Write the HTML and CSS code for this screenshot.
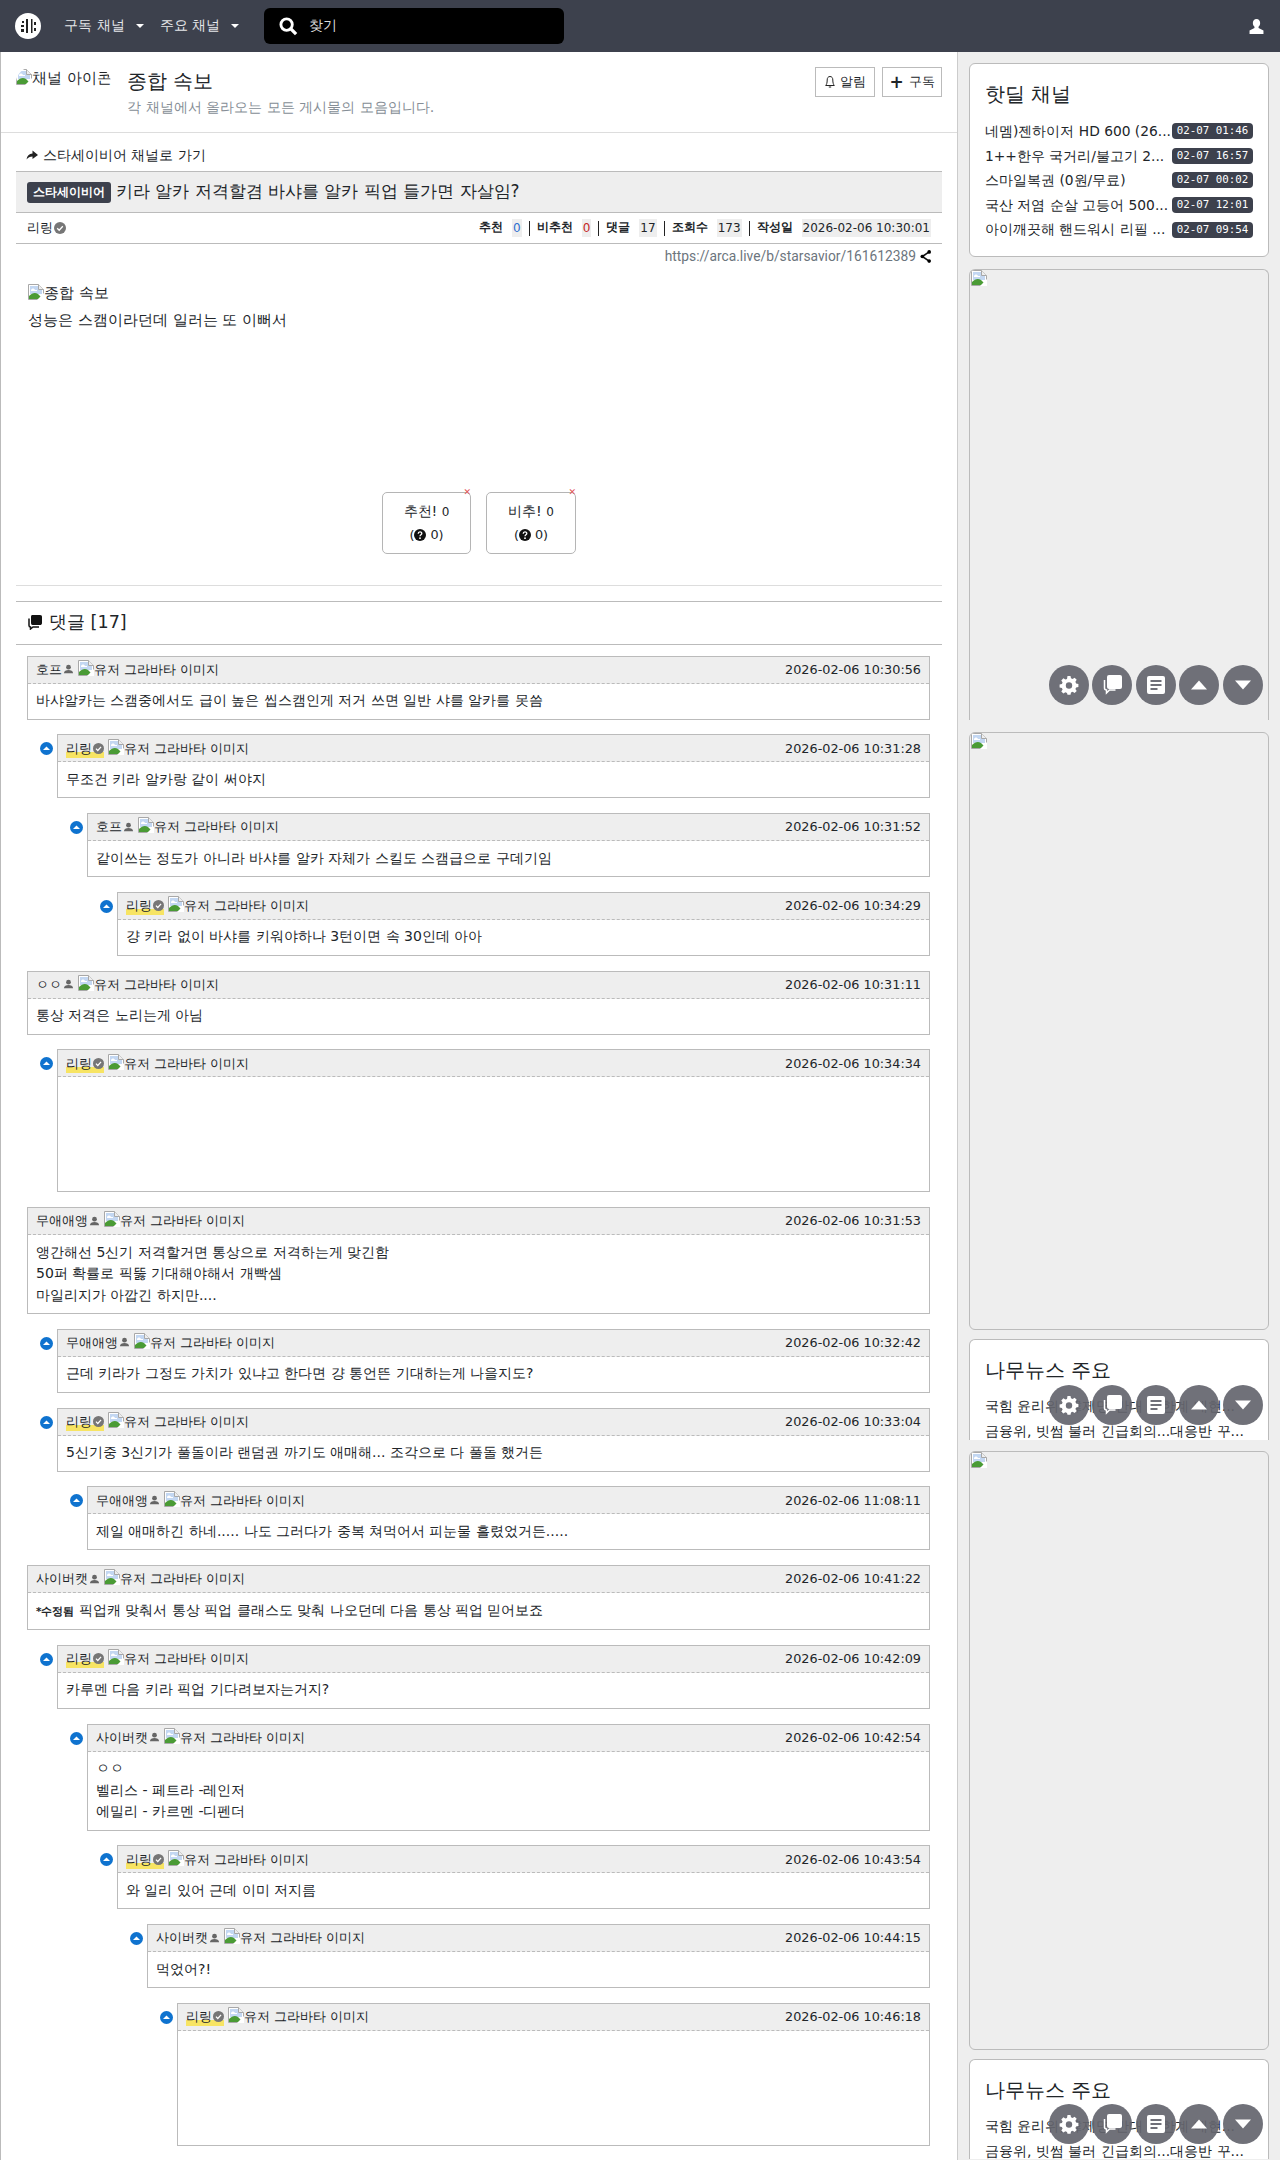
FILE: index.html
```html
<!DOCTYPE html>
<html>
<head>
<meta charset="utf-8">
<title>종합 속보</title>
<link rel="stylesheet" href="styles.css">
</head>
<body>
<svg class="defs" aria-hidden="true">
  <symbol id="broken" viewBox="0 0 16 16">
    <path d="M.5.5h10l5 5v10H.5z" fill="#fff" stroke="#a8a8a8"/>
    <path d="M2 2h8l4 4v4H2z" fill="#c3d7f2"/>
    <path d="M3 6c1-2 3-2 4 0h2v1H3z" fill="#fff"/>
    <path d="M1 15v-3c3-3 6-4 9-2l5 5z" fill="#4a9b35"/>
    <path d="M10.500 .5v5h5" fill="#eee" stroke="#a8a8a8"/>
    <path d="M9 16 16 9v7z" fill="#fff"/>
  </symbol>
  <symbol id="up" viewBox="0 0 13 13">
    <circle cx="6.500" cy="6.500" r="6.500" fill="#0f73cf"/>
    <path d="M3 8l3.500-3.500L10 8z" fill="#fff"/>
  </symbol>
  <symbol id="check" viewBox="0 0 12 12">
    <circle cx="6" cy="6" r="6" fill="#767676"/>
    <path d="M3.200 6.200l2 2 3.600-4" fill="none" stroke="#fff" stroke-width="1.300"/>
  </symbol>
  <symbol id="user" viewBox="0 0 12 12">
    <circle cx="6" cy="3.500" r="2.600" fill="#666"/>
    <path d="M1 10c0-2.500 2.500-3.500 5-3.500s5 1 5 3.500z" fill="#666"/>
  </symbol>
  <symbol id="help" viewBox="0 0 12 12">
    <circle cx="6" cy="6" r="6" fill="#111"/>
    <path d="M4.200 4.700c0-2.300 3.600-2.300 3.600-.2 0 1.300-1.800 1.300-1.800 2.700" fill="none" stroke="#fff" stroke-width="1.300"/>
    <circle cx="6" cy="9.200" r=".9" fill="#fff"/>
  </symbol>
  <symbol id="gear" viewBox="0 0 20 20">
    <path d="M8.500 1h3l.5 2.300 1.600.7 2-1.300 2.100 2.100-1.300 2 .7 1.600 2.300.5v3l-2.300.5-.7 1.600 1.300 2-2.100 2.100-2-1.300-1.600.7-.5 2.300h-3L8 18l-1.600-.7-2 1.300-2.100-2.100 1.300-2-.7-1.600L.6 12.400v-3L2.900 9l.7-1.600-1.300-2 2.100-2.100 2 1.300L8 3.900z" fill="#fff"/>
    <circle cx="10" cy="10.500" r="3.200" fill="#6f7079"/>
  </symbol>
  <symbol id="chat" viewBox="0 0 20 20">
    <rect x="5" y="0" width="15" height="14" rx="2" fill="#fff"/>
    <path d="M2.500 5v8c0 1.500 1 2 2 2v3l3-3h6" fill="none" stroke="#fff" stroke-width="1.500"/>
  </symbol>
  <symbol id="doc" viewBox="0 0 20 20">
    <rect x="1" y="1" width="18" height="18" rx="2" fill="#fff"/>
    <path d="M4.500 5h11v2h-11zM4.500 9h11v2h-11zM4.500 13h7v2h-7z" fill="#6f7079"/>
  </symbol>
  <symbol id="tri-up" viewBox="0 0 20 20"><path d="M10 5.500l8 9H2z" fill="#fff"/></symbol>
  <symbol id="tri-down" viewBox="0 0 20 20"><path d="M2 5.500h16l-8 9z" fill="#fff"/></symbol>
</svg>

<header class="navbar">
  <svg class="logo" viewBox="0 0 26 26" aria-label="로고">
    <circle cx="13" cy="13" r="13" fill="#fff"/>
    <path d="M11 6h2v14h-2zM16 6h1.500v14H16z" fill="#222"/>
    <path d="M6 12h3v2H6zM6 16h3v3H6zM19 9h2v3h-2zM19 15h2v3h-2zM7 8h2v2H7z" fill="#222"/>
  </svg>
  <a class="nav-link">구독 채널<span class="caret"></span></a>
  <a class="nav-link">주요 채널<span class="caret"></span></a>
  <div class="search">
    <svg class="search-icon" viewBox="0 0 20 20"><circle cx="8" cy="8" r="6" fill="none" stroke="#fff" stroke-width="3"/><path d="M12 12l6 6" stroke="#fff" stroke-width="3.500"/></svg>
    <span>찾기</span>
  </div>
  <svg class="nav-user" viewBox="0 0 14 14"><path d="M7 0c2.200 0 3.400 1.600 3.400 3.800 0 1.500-.6 2.800-1.500 3.500v1l4.600 2.500V14H.5v-3.200l4.600-2.500v-1C4.200 6.600 3.600 5.300 3.600 3.800 3.600 1.600 4.800 0 7 0z" fill="#fff"/></svg>
</header>

<div class="layout">
  <main class="main">
    <section class="board-head">
      <div class="channel-icon"><svg class="broken"><use href="#broken"/></svg>채널 아이콘</div>
      <div class="board-info">
        <h1>종합 속보</h1>
        <p>각 채널에서 올라오는 모든 게시물의 모음입니다.</p>
      </div>
      <div class="board-btns">
        <button class="btn"><svg class="bell" viewBox="0 0 10 14"><path d="M5 1.500c2 0 2.800 1.500 2.800 3.500 0 3 .7 4.500 1.500 5.500H.7C1.500 9.500 2.200 8 2.200 5c0-2 .8-3.500 2.800-3.500zM3.800 12h2.400" fill="none" stroke="#222"/></svg>알림</button>
        <button class="btn"><span class="plus">+</span>구독</button>
      </div>
    </section>

    <article class="article">
      <a class="go-channel"><svg class="go-icon" viewBox="0 0 12 12"><path d="M6.500 1.500 12 6 6.500 10V7.500C4 7.500 2 8.500 .5 10.500 1 7 3 4.700 6.500 4.500z" fill="#222"/></svg>스타세이비어 채널로 가기</a>
      <div class="title-bar"><span class="badge">스타세이비어</span><span class="title">키라 알카 저격할겸 바샤를 알카 픽업 들가면 자살임?</span></div>
      <div class="meta">
        <span class="author">리링<svg class="ico12"><use href="#check"/></svg></span>
        <div class="stats">
          <b>추천</b><span class="num blue">0</span><i></i>
          <b>비추천</b><span class="num red">0</span><i></i>
          <b>댓글</b><span class="num">17</span><i></i>
          <b>조회수</b><span class="num">173</span><i></i>
          <b>작성일</b><span class="num">2026-02-06 10:30:01</span>
        </div>
      </div>
      <div class="url">https://arca.live/b/starsavior/161612389<svg class="share" viewBox="0 0 12 14"><path d="M10 2 2.500 7l7.500 5" fill="none" stroke="#111" stroke-width="1.800"/><circle cx="10" cy="2" r="2"/><circle cx="2.500" cy="7" r="2"/><circle cx="10" cy="12" r="2"/></svg></div>
      <div class="content">
        <p><svg class="broken"><use href="#broken"/></svg>종합 속보</p>
        <p>성능은 스캠이라던데 일러는 또 이뻐서</p>
      </div>
      <div class="votes">
        <div class="vote"><span class="x">✕</span><div class="vote-top">추천! <small>0</small></div><div class="vote-sub">(<svg class="ico12"><use href="#help"/></svg> 0)</div></div>
        <div class="vote wide"><span class="x">✕</span><div class="vote-top">비추! <small>0</small></div><div class="vote-sub">(<svg class="ico12"><use href="#help"/></svg> 0)</div></div>
      </div>
    </article>

    <div class="rule-light"></div>
    <h2 class="comment-title"><svg class="cm-icon" viewBox="0 0 16 16"><path d="M5 1h8c1.500 0 2 .8 2 2v6c0 1.500-1 2-2 2H5.500C4.500 11 4 10 4 9V3c0-1.200 .5-2 1-2z" fill="#111"/><path d="M2 4.500v7c0 1 .5 1.500 1.500 1.500v2l2.500-2h6" fill="none" stroke="#111" stroke-width="1.500"/></svg>댓글 [17]</h2>

    <section class="comments">
      <div class="row"><div class="cmt"><div class="cmt-head"><span class="name">호프<svg class="ico11"><use href="#user"/></svg></span><span class="grav"><svg class="broken"><use href="#broken"/></svg>유저 그라바타 이미지</span><time>2026-02-06 10:30:56</time></div><div class="cmt-body">바샤알카는 스캠중에서도 급이 높은 씹스캠인게 저거 쓰면 일반 샤를 알카를 못씀</div></div></div>

      <div class="row lv1"><svg class="reply"><use href="#up"/></svg><div class="cmt"><div class="cmt-head"><span class="name op">리링<svg class="ico11"><use href="#check"/></svg></span><span class="grav"><svg class="broken"><use href="#broken"/></svg>유저 그라바타 이미지</span><time>2026-02-06 10:31:28</time></div><div class="cmt-body">무조건 키라 알카랑 같이 써야지</div></div></div>

      <div class="row lv2"><svg class="reply"><use href="#up"/></svg><div class="cmt"><div class="cmt-head"><span class="name">호프<svg class="ico11"><use href="#user"/></svg></span><span class="grav"><svg class="broken"><use href="#broken"/></svg>유저 그라바타 이미지</span><time>2026-02-06 10:31:52</time></div><div class="cmt-body">같이쓰는 정도가 아니라 바샤를 알카 자체가 스킬도 스캠급으로 구데기임</div></div></div>

      <div class="row lv3"><svg class="reply"><use href="#up"/></svg><div class="cmt"><div class="cmt-head"><span class="name op">리링<svg class="ico11"><use href="#check"/></svg></span><span class="grav"><svg class="broken"><use href="#broken"/></svg>유저 그라바타 이미지</span><time>2026-02-06 10:34:29</time></div><div class="cmt-body">걍 키라 없이 바샤를 키워야하나 3턴이면 속 30인데 아아</div></div></div>

      <div class="row"><div class="cmt"><div class="cmt-head"><span class="name">ㅇㅇ<svg class="ico11"><use href="#user"/></svg></span><span class="grav"><svg class="broken"><use href="#broken"/></svg>유저 그라바타 이미지</span><time>2026-02-06 10:31:11</time></div><div class="cmt-body">통상 저격은 노리는게 아님</div></div></div>

      <div class="row lv1"><svg class="reply"><use href="#up"/></svg><div class="cmt"><div class="cmt-head"><span class="name op">리링<svg class="ico11"><use href="#check"/></svg></span><span class="grav"><svg class="broken"><use href="#broken"/></svg>유저 그라바타 이미지</span><time>2026-02-06 10:34:34</time></div><div class="cmt-body emote"></div></div></div>

      <div class="row"><div class="cmt"><div class="cmt-head"><span class="name">무애애앵<svg class="ico11"><use href="#user"/></svg></span><span class="grav"><svg class="broken"><use href="#broken"/></svg>유저 그라바타 이미지</span><time>2026-02-06 10:31:53</time></div><div class="cmt-body">앵간해선 5신기 저격할거면 통상으로 저격하는게 맞긴함<br>50퍼 확률로 픽뚫 기대해야해서 개빡셈<br>마일리지가 아깝긴 하지만....</div></div></div>

      <div class="row lv1"><svg class="reply"><use href="#up"/></svg><div class="cmt"><div class="cmt-head"><span class="name">무애애앵<svg class="ico11"><use href="#user"/></svg></span><span class="grav"><svg class="broken"><use href="#broken"/></svg>유저 그라바타 이미지</span><time>2026-02-06 10:32:42</time></div><div class="cmt-body">근데 키라가 그정도 가치가 있냐고 한다면 걍 통언뜬 기대하는게 나을지도?</div></div></div>

      <div class="row lv1"><svg class="reply"><use href="#up"/></svg><div class="cmt"><div class="cmt-head"><span class="name op">리링<svg class="ico11"><use href="#check"/></svg></span><span class="grav"><svg class="broken"><use href="#broken"/></svg>유저 그라바타 이미지</span><time>2026-02-06 10:33:04</time></div><div class="cmt-body">5신기중 3신기가 풀돌이라 랜덤권 까기도 애매해... 조각으로 다 풀돌 했거든</div></div></div>

      <div class="row lv2"><svg class="reply"><use href="#up"/></svg><div class="cmt"><div class="cmt-head"><span class="name">무애애앵<svg class="ico11"><use href="#user"/></svg></span><span class="grav"><svg class="broken"><use href="#broken"/></svg>유저 그라바타 이미지</span><time>2026-02-06 11:08:11</time></div><div class="cmt-body">제일 애매하긴 하네..... 나도 그러다가 중복 쳐먹어서 피눈물 흘렸었거든.....</div></div></div>

      <div class="row"><div class="cmt"><div class="cmt-head"><span class="name">사이버캣<svg class="ico11"><use href="#user"/></svg></span><span class="grav"><svg class="broken"><use href="#broken"/></svg>유저 그라바타 이미지</span><time>2026-02-06 10:41:22</time></div><div class="cmt-body"><b class="edited">*수정됨</b> 픽업캐 맞춰서 통상 픽업 클래스도 맞춰 나오던데 다음 통상 픽업 믿어보죠</div></div></div>

      <div class="row lv1"><svg class="reply"><use href="#up"/></svg><div class="cmt"><div class="cmt-head"><span class="name op">리링<svg class="ico11"><use href="#check"/></svg></span><span class="grav"><svg class="broken"><use href="#broken"/></svg>유저 그라바타 이미지</span><time>2026-02-06 10:42:09</time></div><div class="cmt-body">카루멘 다음 키라 픽업 기다려보자는거지?</div></div></div>

      <div class="row lv2"><svg class="reply"><use href="#up"/></svg><div class="cmt"><div class="cmt-head"><span class="name">사이버캣<svg class="ico11"><use href="#user"/></svg></span><span class="grav"><svg class="broken"><use href="#broken"/></svg>유저 그라바타 이미지</span><time>2026-02-06 10:42:54</time></div><div class="cmt-body">ㅇㅇ<br>벨리스 - 페트라 -레인저<br>에밀리 - 카르멘 -디펜더</div></div></div>

      <div class="row lv3"><svg class="reply"><use href="#up"/></svg><div class="cmt"><div class="cmt-head"><span class="name op">리링<svg class="ico11"><use href="#check"/></svg></span><span class="grav"><svg class="broken"><use href="#broken"/></svg>유저 그라바타 이미지</span><time>2026-02-06 10:43:54</time></div><div class="cmt-body">와 일리 있어 근데 이미 저지름</div></div></div>

      <div class="row lv4"><svg class="reply"><use href="#up"/></svg><div class="cmt"><div class="cmt-head"><span class="name">사이버캣<svg class="ico11"><use href="#user"/></svg></span><span class="grav"><svg class="broken"><use href="#broken"/></svg>유저 그라바타 이미지</span><time>2026-02-06 10:44:15</time></div><div class="cmt-body">먹었어?!</div></div></div>

      <div class="row lv5"><svg class="reply"><use href="#up"/></svg><div class="cmt"><div class="cmt-head"><span class="name op">리링<svg class="ico11"><use href="#check"/></svg></span><span class="grav"><svg class="broken"><use href="#broken"/></svg>유저 그라바타 이미지</span><time>2026-02-06 10:46:18</time></div><div class="cmt-body emote"></div></div></div>
    </section>
  </main>

  <aside class="side">
    <section class="card hot">
      <h3>핫딜 채널</h3>
      <ul class="deals">
        <li><span class="deal-name">네멤)젠하이저 HD 600 (26...</span><span class="stamp">02-07 01:46</span></li>
        <li><span class="deal-name">1++한우 국거리/불고기 2...</span><span class="stamp">02-07 16:57</span></li>
        <li><span class="deal-name">스마일복권 (0원/무료)</span><span class="stamp">02-07 00:02</span></li>
        <li><span class="deal-name">국산 저염 순살 고등어 500...</span><span class="stamp">02-07 12:01</span></li>
        <li><span class="deal-name">아이깨끗해 핸드워시 리필 ...</span><span class="stamp">02-07 09:54</span></li>
      </ul>
    </section>

    <section class="card ad ad-a">
      <svg class="broken"><use href="#broken"/></svg>
      <div class="fabs">
        <span class="fab"><svg><use href="#gear"/></svg></span>
        <span class="fab"><svg><use href="#chat"/></svg></span>
        <span class="fab"><svg><use href="#doc"/></svg></span>
        <span class="fab"><svg><use href="#tri-up"/></svg></span>
        <span class="fab"><svg><use href="#tri-down"/></svg></span>
      </div>
    </section>

    <section class="card ad ad-b"><svg class="broken"><use href="#broken"/></svg></section>

    <section class="card news news-a">
      <h3>나무뉴스 주요</h3>
      <p class="news-line">국힘 윤리위, 韓제명 반대 친한계 배현...</p>
      <p class="news-line">금융위, 빗썸 불러 긴급회의...대응반 꾸...</p>
      <div class="fabs">
        <span class="fab"><svg><use href="#gear"/></svg></span>
        <span class="fab"><svg><use href="#chat"/></svg></span>
        <span class="fab"><svg><use href="#doc"/></svg></span>
        <span class="fab"><svg><use href="#tri-up"/></svg></span>
        <span class="fab"><svg><use href="#tri-down"/></svg></span>
      </div>
    </section>

    <section class="card ad ad-c"><svg class="broken"><use href="#broken"/></svg></section>

    <section class="card news news-b">
      <h3>나무뉴스 주요</h3>
      <p class="news-line">국힘 윤리위, 韓제명 반대 친한계 배현...</p>
      <p class="news-line">금융위, 빗썸 불러 긴급회의...대응반 꾸...</p>
      <div class="fabs">
        <span class="fab"><svg><use href="#gear"/></svg></span>
        <span class="fab"><svg><use href="#chat"/></svg></span>
        <span class="fab"><svg><use href="#doc"/></svg></span>
        <span class="fab"><svg><use href="#tri-up"/></svg></span>
        <span class="fab"><svg><use href="#tri-down"/></svg></span>
      </div>
    </section>
  </aside>
</div>
</body>
</html>
```
FILE: styles.css
```css
* { box-sizing: border-box; }
html, body { margin: 0; padding: 0; }
body {
  width: 1280px;
  height: 2160px;
  overflow: hidden;
  background: #fff;
  color: #212529;
  font-family: "DejaVu Sans", sans-serif;
  font-size: 14px;
  line-height: 1.5;
}
.defs { display: none; }
h1, h2, h3, p, ul { margin: 0; padding: 0; font-weight: 400; }
ul { list-style: none; }

.navbar { height: 52px; background: #3d414d; display: flex; align-items: center; padding-left: 15px; color: #fff; }
.logo { width: 26px; height: 26px; margin-right: 23px; flex: none; }
.nav-link { font-size: 14.400px; color: #e6e7ea; margin-right: 16px; display: flex; align-items: center; }
.caret { width: 0; height: 0; margin-left: 11px; border: 4px solid transparent; border-top-color: #fff; border-bottom: 0; }
.search { width: 300px; height: 36px; margin-left: 9px; background: #000; border-radius: 6px; display: flex; align-items: center; padding-left: 15px; font-size: 14.400px; color: #ddd; }
.search-icon { width: 19px; height: 19px; margin-right: 11px; }
.nav-user { width: 15px; height: 15px; margin-left: auto; margin-right: 16px; }

.layout { display: flex; align-items: flex-start; height: 2108px; }
.main { width: 958px; height: 100%; border-left: 1px solid #bbb; border-right: 1px solid #ccc; overflow: hidden; flex: none; }
.side { flex: 1; height: 100%; background: #eee; padding: 11px 11px 0; overflow: hidden; }

.board-head { height: 81px; border-bottom: 1px solid #ddd; display: flex; padding: 0 15px; }
.channel-icon { width: 95px; height: 40px; margin-top: 15px; overflow: hidden; white-space: nowrap; font-size: 15px; line-height: 22px; border-radius: 16px; }
.board-info { margin-left: 16px; padding-top: 13px; }
.board-info h1 { font-size: 20px; line-height: 32px; }
.board-info p { font-size: 14.400px; line-height: 20px; color: #868e96; }
.board-btns { margin-left: auto; display: flex; gap: 7px; padding-top: 15px; }
.btn { height: 30px; width: 60px; padding: 0; background: #fff; border: 1px solid #bbb; font: inherit; font-size: 12.500px; color: #212529; display: flex; align-items: center; justify-content: center; gap: 5px; }
.bell { width: 10px; height: 14px; }
.plus { font-size: 17px; line-height: 1; font-weight: 700; }

.broken { width: 16px; height: 16px; vertical-align: -2px; flex: none; }
.article { padding: 0 15px; }
.go-channel { display: flex; align-items: center; height: 38px; padding: 6px 0 0 10px; font-size: 13.750px; gap: 5px; }
.go-icon { width: 12px; height: 12px; }
.title-bar { height: 42px; background: #eee; border-top: 1px solid #bbb; border-bottom: 1px solid #bbb; display: flex; align-items: center; padding-left: 11px; gap: 5px; }
.badge { background: #3d414d; color: #fff; font-size: 12px; font-weight: 700; border-radius: 3px; height: 21px; line-height: 21px; padding: 0 6px; }
.title { font-size: 16.900px; line-height: 24px; margin-top: -2px; }
.meta { height: 31px; border-bottom: 1px solid #bbb; display: flex; justify-content: space-between; align-items: center; padding: 0 11px; }
.author { font-size: 13px; display: flex; align-items: center; gap: 1px; }
.ico12 { width: 12px; height: 12px; vertical-align: -2px; }
.stats { display: flex; align-items: center; font-size: 12px; }
.stats b { font-size: 11.700px; font-weight: 700; margin-right: 9px; }
.stats i { width: 1px; height: 15px; background: #222; margin: 0 7px; }
.num { background: #eee; padding: 0 1px; }
.blue { color: #2f6fd0; }
.red { color: #c62828; }
.url { height: 25px; padding-right: 11px; font-family: Roboto, sans-serif; font-size: 13.800px; color: #6c757d; display: flex; justify-content: flex-end; align-items: center; gap: 4px; }
.share { width: 11px; height: 13px; }
.content { padding: 14px 12px 0; height: 223px; font-size: 15px; }
.content p { line-height: 21.600px; margin-bottom: 5px; }
.votes { display: flex; justify-content: center; gap: 15px; }
.vote { width: 89px; height: 62px; flex: none; border: 1px solid #b5b5b5; border-radius: 5px; text-align: center; position: relative; }
.vote.wide { width: 90px; }
.vote-top { font-size: 14.400px; margin-top: 5px; line-height: 26px; }
.vote-top small { font-size: 12px; }
.vote-sub { font-size: 12.800px; line-height: 18px; margin-top: 1px; }
.x { position: absolute; right: -1px; top: -6px; color: #e25555; font-size: 9px; line-height: 10px; }

.rule-light { margin: 31px 15px 0; border-top: 1px solid #ddd; }
.comment-title { margin: 15px 15px 0; height: 44px; border-top: 1px solid #bbb; border-bottom: 1px solid #bbb; padding: 0 0 2px 11px; font-size: 17.600px; display: flex; align-items: center; gap: 6px; }
.cm-icon { width: 16px; height: 16px; }

.comments { padding: 10.500px 27px 0 26px; }
.row { display: flex; align-items: flex-start; margin-bottom: 14.750px; gap: 4px; }
.lv1 { padding-left: 13px; }
.lv2 { padding-left: 43px; }
.lv3 { padding-left: 73px; }
.lv4 { padding-left: 103px; }
.lv5 { padding-left: 133px; }
.reply { width: 13px; height: 13px; margin-top: 8px; flex: none; }
.cmt { flex: 1; min-width: 0; border: 1px solid #bbb; }
.cmt-head { height: 27px; background: #eee; border-bottom: 1px dashed #bbb; padding: 0 8px; display: flex; align-items: center; font-size: 12.800px; white-space: nowrap; }
.name { display: inline-flex; align-items: center; }
.op { background: linear-gradient(transparent 70%, #f7e463 70%); }
.ico11 { width: 11px; height: 11px; margin-left: 1px; }
.grav { margin-left: 4px; }
.cmt-head time { margin-left: auto; }
.cmt-body { padding: 6.500px 8px 7px; font-size: 14px; line-height: 21.500px; }
.emote { height: 114px; }
.edited { font-size: 10.500px; }

.card { background: #fff; border: 1px solid #bbb; border-radius: 6px; position: relative; width: 300px; overflow: hidden; }
.card h3 { font-size: 20px; line-height: 30px; }
.hot { height: 194px; padding: 15px 15px 0; margin-bottom: 12px; }
.deals { margin-top: 10px; }
.deals li { height: 24.600px; display: flex; align-items: center; justify-content: space-between; font-size: 13.800px; white-space: nowrap; }
.deal-name { overflow: hidden; }
.stamp { width: 81px; height: 16px; flex: none; background: #3d414d; color: #fff; border-radius: 4px; font-family: "DejaVu Sans Mono", monospace; font-size: 10.800px; line-height: 16px; text-align: center; }
.ad { background: #eee; }
.ad .broken { display: block; margin-left: 1px; }
.ad-a { height: 451px; border-bottom: 0; border-radius: 6px 6px 0 0; margin-bottom: 12px; }
.ad-b { height: 598px; margin-bottom: 9px; }
.ad-c { height: 599px; margin-bottom: 9px; }
.news { padding: 15px 15px 0; border-bottom: 0; border-radius: 6px 6px 0 0; }
.news-a { height: 101px; margin-bottom: 11px; }
.news-b { height: 100px; }
.news-line { font-size: 14px; line-height: 25px; white-space: nowrap; }
.news h3 + .news-line { margin-top: 9px; }

.fabs { position: absolute; right: 5.500px; bottom: 15px; display: flex; gap: 3.500px; }
.fab { width: 40px; height: 40px; border-radius: 50%; background: rgba(100, 101, 110, .92); display: flex; align-items: center; justify-content: center; }
.fab svg { width: 20px; height: 20px; }
```
